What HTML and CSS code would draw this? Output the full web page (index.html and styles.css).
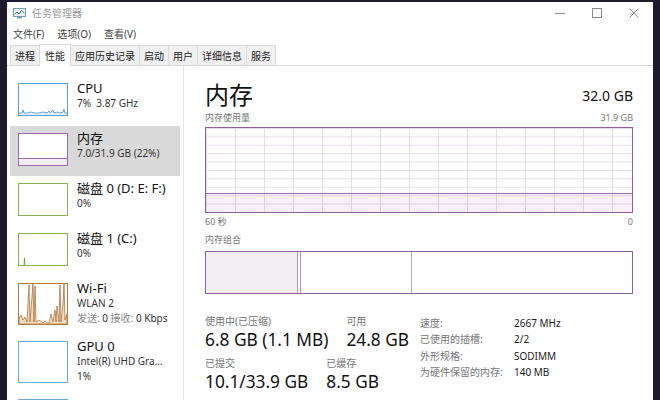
FILE: index.html
```html
<!DOCTYPE html>
<html lang="zh-CN">
<head>
<meta charset="utf-8">
<title>任务管理器</title>
<link rel="stylesheet" href="styles.css">
</head>
<body>
<div class="window">
  <div class="titlebar">
    <svg class="app-icon" width="13" height="11" viewBox="0 0 13 11">
      <rect x="0.5" y="0.5" width="12" height="8" fill="#eaf2f8" stroke="#7a9cb8"/>
      <polyline points="1.5,6.5 4,4 6,6 8.5,2.5 11.5,5" fill="none" stroke="#3c8a5a" stroke-width="1"/>
      <rect x="4" y="9" width="5" height="1.5" fill="#7a9cb8"/>
    </svg>
    <span class="title-text">任务管理器</span>
    <div class="controls">
      <svg width="10" height="10" viewBox="0 0 10 10"><line x1="0" y1="5.5" x2="10" y2="5.5" stroke="#8a8a8a"/></svg>
      <svg width="10" height="10" viewBox="0 0 10 10"><rect x="0.5" y="0.5" width="9" height="9" fill="none" stroke="#8a8a8a"/></svg>
      <svg width="10" height="10" viewBox="0 0 10 10"><path d="M0.5 0.5 L9.5 9.5 M9.5 0.5 L0.5 9.5" stroke="#8a8a8a"/></svg>
    </div>
  </div>
  <div class="menubar">
    <span>文件(F)</span><span>选项(O)</span><span>查看(V)</span>
  </div>
  <div class="tabs">
    <span class="tab">进程</span>
    <span class="tab active">性能</span>
    <span class="tab">应用历史记录</span>
    <span class="tab">启动</span>
    <span class="tab">用户</span>
    <span class="tab">详细信息</span>
    <span class="tab">服务</span>
  </div>
  <div class="content">
    <div class="sidebar">
      <div class="item">
        <div class="thumb thumb-cpu">
          <svg width="48" height="31" viewBox="0 0 48 31" preserveAspectRatio="none">
            <polygon points="0,31 0,29 3,29 4,26 5,29 9,29 12,28 15,29 20,29 24,28 28,29 30,27 31,29 34,26 35,29 38,28 41,29 44,28 45,25 46,29 48,29 48,31" fill="#e3eff8" stroke="none"/>
            <polyline points="0,29 3,29 4,26 5,29 9,29 12,28 15,29 20,29 24,28 28,29 30,27 31,29 34,26 35,29 38,28 41,29 44,28 45,25 46,29 48,29" fill="none" stroke="#4a90c8" stroke-width="0.8"/>
          </svg>
        </div>
        <div class="info">
          <div class="name">CPU</div>
          <div class="sub">7%&nbsp; 3.87 GHz</div>
        </div>
      </div>
      <div class="item selected">
        <div class="thumb thumb-mem"><div class="thumb-fill"></div></div>
        <div class="info">
          <div class="name">内存</div>
          <div class="sub">7.0/31.9 GB (22%)</div>
        </div>
      </div>
      <div class="item">
        <div class="thumb thumb-disk"></div>
        <div class="info">
          <div class="name">磁盘 0 (D: E: F:)</div>
          <div class="sub">0%</div>
        </div>
      </div>
      <div class="item">
        <div class="thumb thumb-disk">
          <svg width="48" height="31" viewBox="0 0 48 31" preserveAspectRatio="none">
            <polyline points="5,31 5.5,24 6,31" fill="#cfe3b8" stroke="#5c9a2c" stroke-width="0.8"/>
          </svg>
        </div>
        <div class="info">
          <div class="name">磁盘 1 (C:)</div>
          <div class="sub">0%</div>
        </div>
      </div>
      <div class="item tall">
        <div class="thumb thumb-wifi">
          <svg width="48" height="40" viewBox="0 0 48 40" preserveAspectRatio="none">
            <polygon points="0,40 0,34 2,31 4,36 6,33 8,38 10,1 11,38 14,0 15,38 16,2 17,38 20,36 24,39 26,37 28,39 30,39 32,30 34,38 36,26 37,38 38,22 40,38 41,1 42,38 44,20 45,0 46,36 48,30 48,40" fill="#f1dcc4" stroke="#a8642a" stroke-width="0.7"/>
          </svg>
        </div>
        <div class="info">
          <div class="name">Wi-Fi</div>
          <div class="sub">WLAN 2</div>
          <div class="sub"><span class="muted">发送:</span> 0 <span class="muted">接收:</span> 0 Kbps</div>
        </div>
      </div>
      <div class="item tall">
        <div class="thumb thumb-gpu"></div>
        <div class="info">
          <div class="name">GPU 0</div>
          <div class="sub">Intel(R) UHD Gra...</div>
          <div class="sub">1%</div>
        </div>
      </div>
      <div class="item tall">
        <div class="thumb thumb-gpu"></div>
        <div class="info">
          <div class="name">GPU 1</div>
        </div>
      </div>
    </div>
    <div class="main">
      <div class="head">
        <span class="big-title">内存</span>
        <span class="total">32.0 GB</span>
      </div>
      <div class="subhead">
        <span>内存使用量</span>
        <span>31.9 GB</span>
      </div>
      <div class="graph"><div class="graph-fill"></div></div>
      <div class="axis">
        <span>60 秒</span>
        <span>0</span>
      </div>
      <div class="section-label">内存组合</div>
      <div class="composition">
        <div class="seg seg-used"></div>
        <div class="seg seg-mod"></div>
        <div class="seg seg-standby"></div>
        <div class="seg seg-free"></div>
      </div>
      <div class="stats">
        <div class="stats-left">
          <div class="stat-row">
            <div class="stat"><div class="stat-label">使用中(已压缩)</div><div class="stat-value">6.8 GB (1.1 MB)</div></div>
            <div class="stat"><div class="stat-label">可用</div><div class="stat-value">24.8 GB</div></div>
          </div>
          <div class="stat-row">
            <div class="stat"><div class="stat-label">已提交</div><div class="stat-value">10.1/33.9 GB</div></div>
            <div class="stat"><div class="stat-label">已缓存</div><div class="stat-value">8.5 GB</div></div>
          </div>
        </div>
        <div class="stats-right">
          <span class="k">速度:</span><span class="v">2667 MHz</span>
          <span class="k">已使用的插槽:</span><span class="v">2/2</span>
          <span class="k">外形规格:</span><span class="v">SODIMM</span>
          <span class="k">为硬件保留的内存:</span><span class="v">140 MB</span>
        </div>
      </div>
    </div>
  </div>
</div>
</body>
</html>
```
FILE: styles.css
```css
html, body {
  margin: 0;
  padding: 0;
}
body {
  width: 660px;
  height: 400px;
  overflow: hidden;
  background: #1c1a2b;
  font-family: "Noto Sans", "Noto Sans CJK SC", sans-serif;
  color: #1a1a1a;
}
.window {
  margin: 2px 0 0 7px;
  width: 646px;
  height: 398px;
  background: #fff;
  display: flex;
  flex-direction: column;
  overflow: hidden;
}
.titlebar {
  height: 22px;
  display: flex;
  align-items: center;
  padding-left: 6px;
  font-size: 10px;
}
.app-icon {
  margin-right: 6px;
}
.title-text {
  color: #9a9a9a;
  line-height: 14px;
}
.controls {
  margin-left: auto;
  display: flex;
  align-items: center;
  gap: 27px;
  padding-right: 14px;
}
.menubar {
  height: 20px;
  display: flex;
  align-items: center;
  gap: 13px;
  padding-left: 6px;
  font-size: 10px;
  color: #444;
  line-height: 14px;
}
.tabs {
  height: 21px;
  display: flex;
  align-items: flex-end;
  padding-left: 3px;
  border-bottom: 1px solid #d9d9d9;
  background: #fff;
}
.tab {
  font-size: 10px;
  line-height: 14px;
  padding: 3px 4px 2px;
  background: #f0f0f0;
  border: 1px solid #dadada;
  border-bottom: none;
  margin-right: -1px;
  color: #222;
}
.tab.active {
  background: #fff;
  padding: 4px 5px 3px;
  position: relative;
  z-index: 1;
  margin-bottom: -1px;
}
.content {
  flex: 1;
  display: flex;
  min-height: 0;
}
.sidebar {
  width: 170px;
  margin-left: 3px;
  padding-top: 10px;
  padding-right: 3px;
  border-right: 1px solid #e6e6e6;
}
.item {
  height: 50px;
  box-sizing: border-box;
  padding: 7px 0 0 8px;
  display: flex;
  gap: 9px;
}
.item.tall {
  height: 58px;
}
.item.selected {
  background: #d9d9d9;
}
.thumb {
  width: 50px;
  height: 33px;
  box-sizing: border-box;
  border: 1px solid #6ea7d4;
  background: #fff;
  flex: none;
  display: flex;
  flex-direction: column;
  justify-content: flex-end;
}
.item.tall .thumb {
  height: 42px;
}
.thumb svg {
  display: block;
}
.thumb-cpu { border-color: #5f9fd0; }
.thumb-mem { border-color: #9a6ba8; }
.thumb-fill {
  height: 6px;
  background: #f4ecf7;
  border-top: 1px solid #9a6ba8;
}
.thumb-disk { border-color: #86b05a; }
.thumb-wifi { border-color: #b07a44; }
.thumb-gpu { border-color: #6ea7d4; }
.info {
  margin-top: -3px;
  white-space: nowrap;
}
.name {
  font-size: 13px;
  line-height: 16px;
  color: #111;
}
.sub {
  font-size: 10px;
  line-height: 15px;
  color: #333;
}
.muted {
  color: #8a8a8a;
}
.main {
  flex: 1;
  padding: 13px 20px 0 21px;
  min-width: 0;
}
.head {
  display: flex;
  justify-content: space-between;
  align-items: center;
  height: 30px;
}
.big-title {
  font-size: 24px;
  line-height: 30px;
  font-family: "Noto Sans CJK SC", sans-serif;
  font-weight: 400;
  color: #111;
}
.total {
  font-size: 14px;
  line-height: 18px;
  margin-top: 4px;
  color: #111;
}
.subhead, .axis {
  display: flex;
  justify-content: space-between;
  font-size: 9px;
  line-height: 14px;
  color: #777;
}
.subhead {
  margin-top: 2px;
}
.graph {
  margin-top: 2px;
  height: 86px;
  box-sizing: border-box;
  border: 1px solid #8e5f9c;
  background-color: #fff;
  background-image:
    linear-gradient(to right, #e6dbe9 1px, transparent 1px),
    linear-gradient(to bottom, #e6dbe9 1px, transparent 1px);
  background-size: 29px 100%, 100% 8.4px;
  display: flex;
  flex-direction: column;
  justify-content: flex-end;
}
.graph-fill {
  height: 18px;
  background: rgba(150, 60, 180, 0.08);
  border-top: 1px solid #9a6ba8;
}
.axis {
  margin-top: 2px;
}
.section-label {
  margin-top: 4px;
  font-size: 9px;
  line-height: 14px;
  color: #777;
}
.composition {
  margin-top: 4px;
  height: 43px;
  box-sizing: border-box;
  border: 1px solid #8e5f9c;
  display: flex;
}
.seg {
  height: 100%;
}
.seg-used {
  width: 91px;
  background: #f2eff3;
  border-right: 1px solid #a899ad;
}
.seg-mod {
  width: 2px;
  border-right: 1px solid #a899ad;
}
.seg-standby {
  width: 110px;
  border-right: 1px solid #b5a9b9;
}
.seg-free {
  flex: 1;
}
.stats {
  margin-top: 20px;
  display: grid;
  grid-template-columns: 215px 1fr;
}
.stat-row {
  display: flex;
  gap: 18px;
}
.stat-row + .stat-row {
  margin-top: 5px;
}
.stat-label {
  font-size: 10px;
  line-height: 14px;
  color: #777;
}
.stat-value {
  font-size: 17.3px;
  line-height: 22px;
  color: #111;
  margin-top: 1px;
}
.stats-right {
  display: grid;
  grid-template-columns: 94px 1fr;
  grid-auto-rows: 16.3px;
  font-size: 10px;
  line-height: 16px;
  align-content: start;
  padding-top: 1px;
}
.k {
  color: #777;
}
.v {
  color: #222;
}
```
